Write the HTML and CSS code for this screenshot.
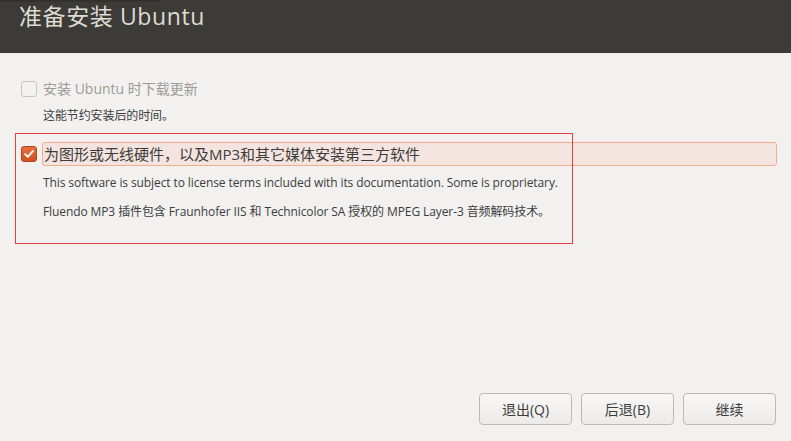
FILE: index.html
```html
<!DOCTYPE html>
<html lang="zh-CN">
<head>
<meta charset="utf-8">
<title>准备安装 Ubuntu</title>
<link rel="stylesheet" href="styles.css">
</head>
<body>
<div class="window">
  <header class="header">
    <div class="header-shadow"></div>
    <h1 class="title">准备安装 Ubuntu</h1>
  </header>
  <main class="content">
    <div class="option disabled">
      <span class="check"></span>
      <span class="option-label">安装 Ubuntu 时下载更新</span>
    </div>
    <p class="note first-note">这能节约安装后的时间。</p>

    <div class="option checked-row">
      <span class="check checked">
        <svg width="16" height="16" viewBox="0 0 16 16"><path d="M3.6 8.2 L6.6 11.2 L12.4 4.6" fill="none" stroke="#ffffff" stroke-width="2.2" stroke-linecap="round" stroke-linejoin="round"/></svg>
      </span>
      <span class="option-label focused">为图形或无线硬件，以及MP3和其它媒体安装第三方软件</span>
    </div>
    <p class="note note-license">This software is subject to license terms included with its documentation. Some is proprietary.</p>
    <p class="note note-mp3">Fluendo MP3 插件包含 Fraunhofer IIS 和 Technicolor SA 授权的 MPEG Layer-3 音频解码技术。</p>

    <div class="annotation"></div>
  </main>
  <footer class="buttons">
    <button class="btn">退出(Q)</button>
    <button class="btn">后退(B)</button>
    <button class="btn">继续</button>
  </footer>
</div>
</body>
</html>
```
FILE: styles.css
```css
html, body {
  margin: 0;
  padding: 0;
  background: #f2f1f0;
}
body {
  font-family: "Open Sans", "Noto Sans CJK SC", sans-serif;
  color: #3c3c3c;
}
.window {
  width: 791px;
  height: 441px;
  display: flex;
  flex-direction: column;
  position: relative;
  overflow: hidden;
}
.header {
  height: 53px;
  flex: none;
  background: #3c3b37;
  position: relative;
}
.header-shadow {
  position: absolute;
  left: 0;
  top: 0;
  width: 160px;
  height: 3px;
  background: linear-gradient(to bottom, #2e2d2a, #3c3b37);
}
.title {
  margin: 0;
  padding: 1px 0 0 19px;
  font-family: "Open Sans", "Noto Sans CJK SC", sans-serif;
  font-weight: normal;
  font-size: 23px;
  letter-spacing: 0.6px;
  line-height: 30px;
  color: #dfdbd2;
}
.content {
  flex: 1;
  position: relative;
  padding: 24px 14px 0 21px;
}
.option {
  display: flex;
  align-items: center;
  gap: 6px;
  height: 24px;
}
.check {
  width: 14px;
  height: 14px;
  border: 1px solid #c9c6c1;
  border-radius: 3px;
  background: #f3f2f1;
  flex: none;
  display: flex;
  align-items: center;
  justify-content: center;
}
.check.checked {
  border-color: #b2441e;
  background: linear-gradient(to bottom, #e8703f, #cf4f1f);
}
.option-label {
  font-size: 14px;
  line-height: 22px;
}
.disabled .option-label {
  color: #9d9b97;
}
.option-label.focused {
  flex: 1;
  padding: 0 1px;
  margin-left: -1px;
  border: 1px solid #f4ac8e;
  border-radius: 3px;
  background: #f4e4df;
  font-size: 15px;
  color: #3c3c3c;
}
.checked-row {
  margin-top: 18px;
}
.note {
  margin: 0;
  padding-left: 22px;
  font-size: 12px;
  letter-spacing: -0.1px;
  line-height: 16px;
}
.first-note {
  margin-top: 7px;
}
.note-license {
  margin-top: 9px;
}
.note-mp3 {
  margin-top: 13px;
}
.annotation {
  position: absolute;
  left: 15px;
  top: 80px;
  width: 556px;
  height: 109px;
  border: 1px solid #e63b3f;
  pointer-events: none;
}
.buttons {
  flex: none;
  display: flex;
  justify-content: flex-end;
  gap: 9px;
  padding: 0 15px 16px 0;
}
.btn {
  width: 93px;
  height: 32px;
  border: 1px solid #bdbab5;
  border-radius: 4px;
  background: linear-gradient(to bottom, #f8f7f6, #ecebe9);
  font-family: "Open Sans", "Noto Sans CJK SC", sans-serif;
  font-size: 14px;
  color: #3c3c3c;
  padding: 0;
}
```
